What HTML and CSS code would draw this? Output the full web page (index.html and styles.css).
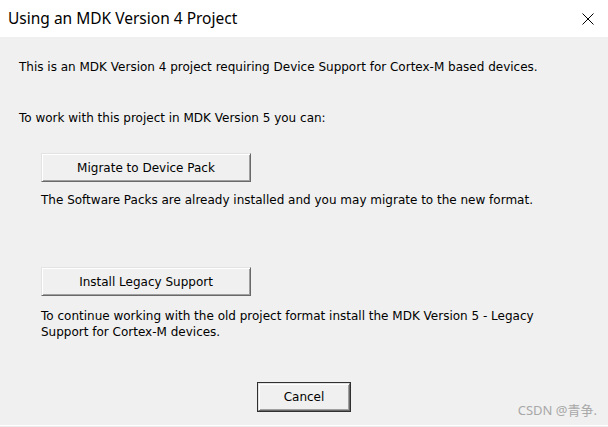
FILE: index.html
```html
<!DOCTYPE html>
<html>
<head>
<meta charset="utf-8">
<link rel="stylesheet" href="styles.css">
</head>
<body>
<div class="window">
  <div class="titlebar">
    <span class="title">Using an MDK Version 4 Project</span>
    <svg class="close" width="12" height="12" viewBox="0 0 12 12"><path d="M0.5 0.5 L11.5 11.5 M11.5 0.5 L0.5 11.5" stroke="#000" stroke-width="1" fill="none"/></svg>
  </div>
  <div class="content">
    <p class="line intro">This is an MDK Version 4 project requiring Device Support for Cortex-M based devices.</p>
    <p class="line work">To work with this project in MDK Version 5 you can:</p>
    <div class="option">
      <button class="btn">Migrate to Device Pack</button>
      <p class="line desc first-desc">The Software Packs are already installed and you may migrate to the new format.</p>
    </div>
    <div class="option second">
      <button class="btn">Install Legacy Support</button>
      <p class="line desc">To continue working with the old project format install the MDK Version 5 - Legacy<br>Support for Cortex-M devices.</p>
    </div>
    <div class="actions">
      <button class="btn btn-default">Cancel</button>
    </div>
    <div class="watermark">CSDN @青争.</div>
  </div>
  <div class="bottom-edge"></div>
</div>
</body>
</html>
```

FILE: styles.css
```css
html, body {
  margin: 0;
  padding: 0;
  background: #ffffff;
}
.window {
  width: 608px;
  height: 427px;
  display: flex;
  flex-direction: column;
  overflow: hidden;
}
.titlebar {
  height: 37px;
  flex: none;
  background: #ffffff;
  display: flex;
  align-items: center;
  justify-content: space-between;
  padding: 0 14px 0 8px;
  box-sizing: border-box;
}
.title {
  font-family: "Noto Sans", "Open Sans", sans-serif;
  font-size: 15.5px;
  color: #000;
  margin-top: -1px;
}
.close {
  display: block;
}
.content {
  position: relative;
  height: 388px;
  flex: none;
  background: #f0f0f0;
  padding-left: 19px;
  box-sizing: border-box;
  font-family: "DejaVu Sans", Verdana, sans-serif;
  font-size: 12px;
  color: #000;
  display: flex;
  flex-direction: column;
}
.line {
  margin: 0;
  line-height: 16px;
  letter-spacing: 0;
}
.intro {
  margin-top: 22px;
}
.work {
  margin-top: 35px;
}
.option {
  margin-left: 22px;
  margin-top: 27px;
  display: flex;
  flex-direction: column;
  align-items: flex-start;
}
.option.second {
  margin-top: 59px;
}
.desc {
  margin-top: 12px;
}
.first-desc {
  margin-top: 10px;
}
.btn {
  font-family: "DejaVu Sans", Verdana, sans-serif;
  font-size: 12px;
  letter-spacing: 0;
  color: #000;
  width: 210px;
  height: 29px;
  box-sizing: border-box;
  background: #f0f0f0;
  border-style: solid;
  border-width: 1px;
  border-color: #e3e3e3 #696969 #696969 #e3e3e3;
  box-shadow: inset 1px 1px #ffffff, inset -1px -1px #a0a0a0;
  padding: 0;
  margin: 0;
}
.actions {
  display: flex;
  justify-content: flex-start;
  padding-left: 239px;
  margin-top: 43px;
}
.btn-default {
  width: 92px;
  height: 28px;
  box-shadow: 0 0 0 1px #303030, inset 1px 1px #ffffff, inset -1px -1px #a0a0a0;
}
.watermark {
  position: absolute;
  right: 11px;
  bottom: 6px;
  font-family: "Noto Sans", "Noto Sans CJK SC", sans-serif;
  font-size: 13px;
  color: #a8a8a8;
}
.bottom-edge {
  flex: 1;
  background: #ffffff;
  border-bottom: 1px solid #ececec;
}
```
